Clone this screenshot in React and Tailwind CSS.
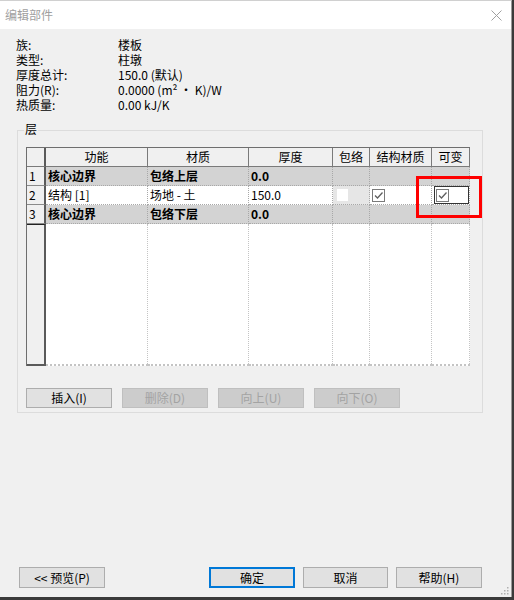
import React from "react";

const F = { fontFamily: '"Noto Sans CJK SC", "Microsoft YaHei", sans-serif' };

function Check({ className = "" }) {
  return (
    <div className={"w-[13px] h-[13px] border border-[#7a7a7a] bg-white flex items-center justify-center " + className}>
      <svg width="11" height="11" viewBox="0 0 11 11">
        <path d="M2 5.5 L4.5 8 L9.5 2.5" fill="none" stroke="#5f5f5f" strokeWidth="1.3" />
      </svg>
    </div>
  );
}

function Btn({ children, w = "w-[86px]", h = "h-[20px]", disabled, def, className = "" }) {
  let cls = "flex items-center justify-center text-[12px] leading-none ";
  if (disabled) cls += "bg-[#cccccc] border border-[#bfbfbf] text-[#a3a3a3] ";
  else if (def) cls += "bg-[#e1e1e1] border-2 border-[#0078d7] text-black ";
  else cls += "bg-[#e1e1e1] border border-[#adadad] text-black ";
  return <div className={cls + w + " " + h + " " + className}>{children}</div>;
}

const HEAD = ["", "功能", "材质", "厚度", "包络", "结构材质", "可变"];

export default function App() {
  const hcell = "h-[19px] border-r border-b border-[#7a7a7a] bg-[#f0f0f0] flex items-center justify-center text-[12px] leading-[14px]";
  const numCell = "h-[19px] border-r-2 border-b border-r-[#5a5a5a] border-b-[#8a8a8a] bg-[#f0f0f0] flex items-center pl-[2px] text-[12px] leading-[14px]";
  const dcell = "h-[19px] border-r border-b border-dotted border-[#a8a8a8] flex items-center pl-[2px] text-[12px] leading-[14px] whitespace-nowrap";
  const rows = [
    { n: "1", gray: true, c: ["核心边界", "包络上层", "0.0"] },
    { n: "2", gray: false, c: ["结构 [1]", "场地 - 土", "150.0"] },
    { n: "3", gray: true, c: ["核心边界", "包络下层", "0.0"] },
  ];
  return (
    <div className="w-[514px] h-[600px] bg-[#3a3a3a]" style={F}>
      <div className="relative w-[512px] h-[597px] bg-[#f0f0f0] border-r border-t border-[#9a9a9a] border-t-[#d0d0d0] flex flex-col text-black">
        {/* title bar */}
        <div className="h-[28px] bg-white flex items-center justify-between pl-[5px] pr-[9px]">
          <span className="text-[12px] text-[#a0a0a0]">编辑部件</span>
          <svg width="11" height="11" viewBox="0 0 11 11">
            <path d="M0.5 0.5 L10.5 10.5 M10.5 0.5 L0.5 10.5" stroke="#a0a0a0" strokeWidth="1" />
          </svg>
        </div>

        {/* info */}
        <div className="mt-[8px] pl-[16px] text-[12px]">
          {[
            ["族:", "楼板"],
            ["类型:", "柱墩"],
            ["厚度总计:", "150.0 (默认)"],
            ["阻力(R):", "0.0000 (m² · K)/W"],
            ["热质量:", "0.00 kJ/K"],
          ].map(([a, b]) => (
            <div key={a} className="flex h-[15px] items-center">
              <span className="w-[102px] leading-[13px]">{a}</span>
              <span className="leading-[13px]">{b}</span>
            </div>
          ))}
        </div>

        {/* group box */}
        <div className="relative mt-[18px] ml-[17px] w-[466px] h-[283px] border border-[#dcdcdc] pt-[16px] pl-[8px]">
          <span className="absolute left-[6px] top-[-9px] px-[1px] bg-[#f0f0f0] text-[12px] leading-[14px]">层</span>

          <div className="w-[444px] border-l border-t border-[#6e6e6e] bg-white">
            <div className="grid grid-cols-[19px_102px_101px_84px_37px_62px_38px]">
              {HEAD.map((h, i) => (
                <div key={i} className={i === 0 ? hcell + " border-r-2 border-r-[#5a5a5a]" : hcell}>{h}</div>
              ))}
              {rows.map((r) => (
                <React.Fragment key={r.n}>
                  <div className={numCell}>{r.n}</div>
                  {r.c.map((t, j) => (
                    <div key={j} className={dcell + (r.gray ? " bg-[#d3d3d3] font-bold" : " bg-white")}>{t}</div>
                  ))}
                  {r.gray ? (
                    <>
                      <div className={dcell + " bg-[#d3d3d3]"} />
                      <div className={dcell + " bg-[#d3d3d3]"} />
                      <div className={dcell + " bg-[#d3d3d3]"} />
                    </>
                  ) : (
                    <>
                      <div className={dcell + " bg-[#e6e6e6] pl-[4px]"}>
                        <div className="w-[11px] h-[12px] bg-white" />
                      </div>
                      <div className={dcell + " bg-white"}>
                        <Check />
                      </div>
                      <div className={dcell + " bg-white pl-0"}>
                        <div className="w-full h-full border border-solid border-[#333333] flex items-center pl-[1px]">
                          <Check />
                        </div>
                      </div>
                    </>
                  )}
                </React.Fragment>
              ))}
              {/* empty area */}
              <div className="h-[142px] bg-[#f0f0f0] border-r-2 border-b-2 border-[#5a5a5a] border-t border-t-[#222222]" />
              {[0, 1, 2, 3, 4, 5].map((k) => (
                <div key={k} className="h-[142px] bg-white border-r border-b-2 border-dotted border-[#c4c4c4]" />
              ))}
            </div>
          </div>

          <div className="mt-[22px] flex gap-[10px]">
            <Btn>插入(I)</Btn>
            <Btn disabled>删除(D)</Btn>
            <Btn disabled>向上(U)</Btn>
            <Btn disabled>向下(O)</Btn>
          </div>
        </div>

        <div className="flex-1" />

        {/* footer */}
        <div className="flex pl-[19px] mb-[9px]">
          <Btn h="h-[21px]">&lt;&lt; 预览(P)</Btn>
          <Btn h="h-[21px]" def className="ml-[104px]">确定</Btn>
          <Btn h="h-[21px]" w="w-[85px]" className="ml-[8px]">取消</Btn>
          <Btn h="h-[21px]" className="ml-[8px]">帮助(H)</Btn>
        </div>

        {/* resize grip */}
        <svg className="absolute right-[2px] bottom-[2px]" width="9" height="9" viewBox="0 0 9 9">
          {[[7, 1], [7, 4], [4, 4], [7, 7], [4, 7], [1, 7]].map(([x, y], i) => (
            <rect key={i} x={x} y={y} width="1.5" height="1.5" fill="#b0b0b0" />
          ))}
        </svg>

        {/* red annotation */}
        <div className="absolute left-[416px] top-[175px] w-[66px] h-[42px] border-[3px] border-[#ff0000]" />
      </div>
    </div>
  );
}
